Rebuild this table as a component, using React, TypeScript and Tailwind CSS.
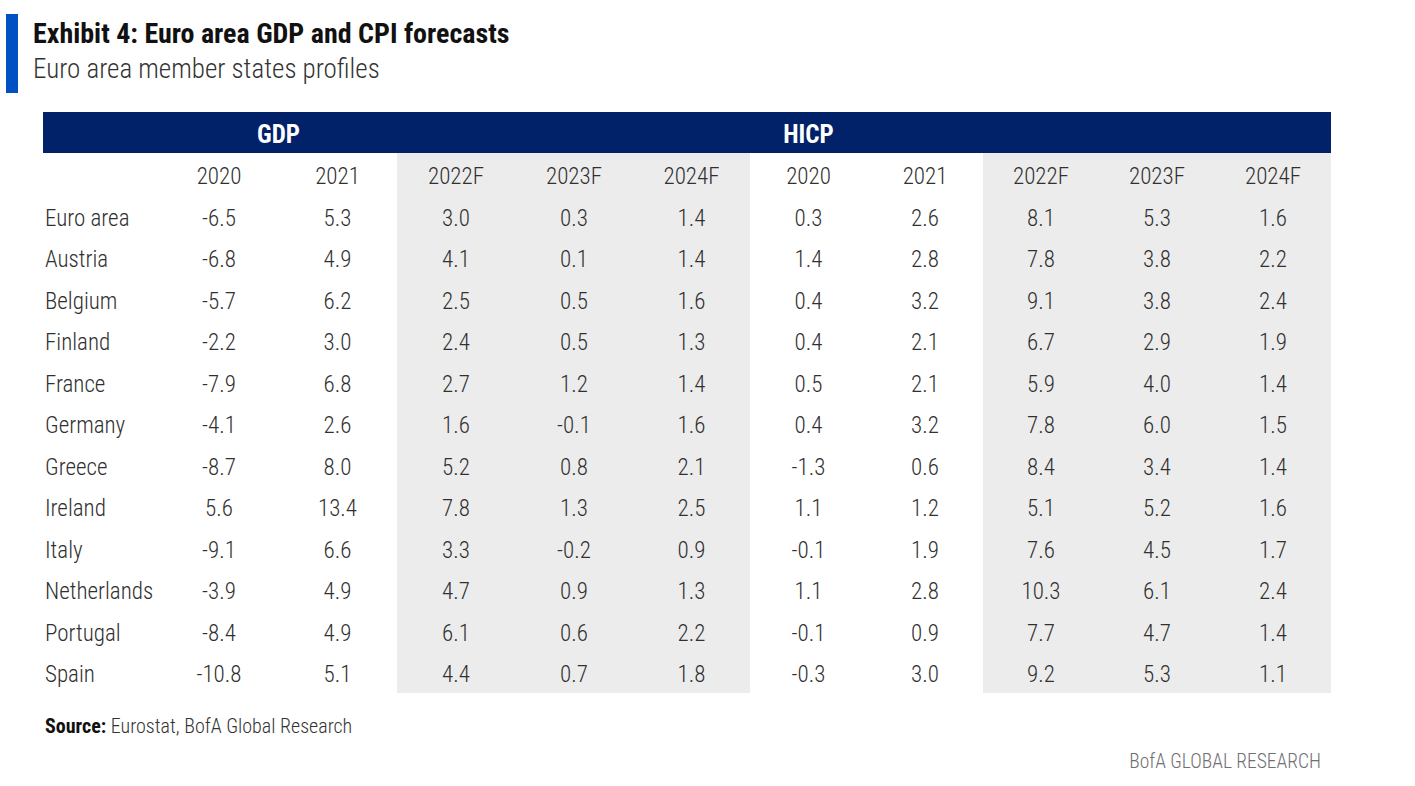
import React from 'react';

const years = ['2020', '2021', '2022F', '2023F', '2024F'];

const rows: [string, string[]][] = [
  ['Euro area', ['-6.5', '5.3', '3.0', '0.3', '1.4', '0.3', '2.6', '8.1', '5.3', '1.6']],
  ['Austria', ['-6.8', '4.9', '4.1', '0.1', '1.4', '1.4', '2.8', '7.8', '3.8', '2.2']],
  ['Belgium', ['-5.7', '6.2', '2.5', '0.5', '1.6', '0.4', '3.2', '9.1', '3.8', '2.4']],
  ['Finland', ['-2.2', '3.0', '2.4', '0.5', '1.3', '0.4', '2.1', '6.7', '2.9', '1.9']],
  ['France', ['-7.9', '6.8', '2.7', '1.2', '1.4', '0.5', '2.1', '5.9', '4.0', '1.4']],
  ['Germany', ['-4.1', '2.6', '1.6', '-0.1', '1.6', '0.4', '3.2', '7.8', '6.0', '1.5']],
  ['Greece', ['-8.7', '8.0', '5.2', '0.8', '2.1', '-1.3', '0.6', '8.4', '3.4', '1.4']],
  ['Ireland', ['5.6', '13.4', '7.8', '1.3', '2.5', '1.1', '1.2', '5.1', '5.2', '1.6']],
  ['Italy', ['-9.1', '6.6', '3.3', '-0.2', '0.9', '-0.1', '1.9', '7.6', '4.5', '1.7']],
  ['Netherlands', ['-3.9', '4.9', '4.7', '0.9', '1.3', '1.1', '2.8', '10.3', '6.1', '2.4']],
  ['Portugal', ['-8.4', '4.9', '6.1', '0.6', '2.2', '-0.1', '0.9', '7.7', '4.7', '1.4']],
  ['Spain', ['-10.8', '5.1', '4.4', '0.7', '1.8', '-0.3', '3.0', '9.2', '5.3', '1.1']],
];

// forecast columns get the grey band
const shaded = [false, false, true, true, true, false, false, true, true, true];

const cols = 'grid grid-cols-[117px_118px_119px_118px_118px_117px_117px_116px_116px_116px_116px]';

export default function App() {
  return (
    <div className="w-[1415px] h-[786px] bg-white text-[#303030] font-light font-['Roboto_Condensed',sans-serif]">
      {/* Title block */}
      <div className="flex pt-[14px]">
        <div className="ml-[6px] w-[12px] h-[79px] bg-[#0052c4]" />
        <div className="ml-[15px]">
          <div className="text-[28px] leading-[36px] font-bold text-[#111] pt-[2px]">
            Exhibit 4: Euro area GDP and CPI forecasts
          </div>
          <div className="text-[27px] leading-[34px] text-[#333]">Euro area member states profiles</div>
        </div>
      </div>

      {/* Table */}
      <div className="ml-[43px] mt-[19px] w-[1288px]">
        <div className={`${cols} h-[41px] bg-[#012169] text-white font-bold text-[25px] items-center pt-[4px]`}>
          <div />
          <div className="col-span-2 text-center">GDP</div>
          <div />
          <div />
          <div />
          <div className="text-center">HICP</div>
        </div>

        <div className={`${cols} h-[42px] text-[23px]`}>
          <div />
          {[...years, ...years].map((y, i) => (
            <div key={i} className={`flex items-center justify-center pt-[6px] ${shaded[i] ? 'bg-[#ececec]' : ''}`}>
              {y}
            </div>
          ))}
        </div>

        {rows.map(([name, vals]) => (
          <div key={name} className={`${cols} h-[41.5px] text-[23px]`}>
            <div className="flex items-center pl-[2px] pt-[6px]">{name}</div>
            {vals.map((v, i) => (
              <div key={i} className={`flex items-center justify-center pt-[6px] ${shaded[i] ? 'bg-[#ececec]' : ''}`}>
                {v}
              </div>
            ))}
          </div>
        ))}
      </div>

      {/* Footer */}
      <div className="ml-[45px] mt-[18px] text-[20px] text-[#333]">
        <span className="font-bold text-[#111]">Source:</span> Eurostat, BofA Global Research
      </div>
      <div className="w-[1321px] text-right mt-[6px] text-[19.5px] text-[#707070]">BofA GLOBAL RESEARCH</div>
    </div>
  );
}
